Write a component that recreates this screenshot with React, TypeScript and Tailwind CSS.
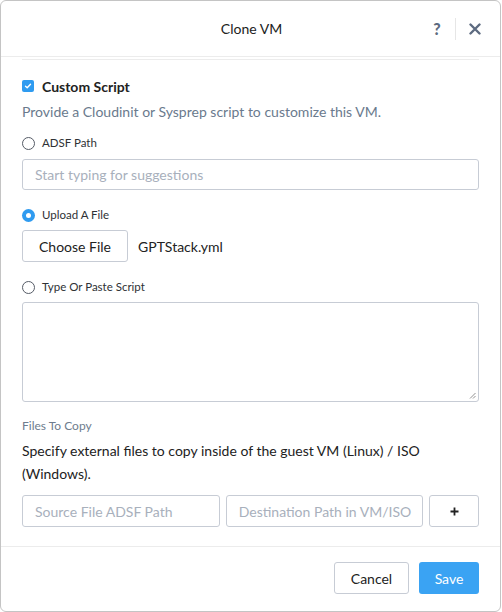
import React from 'react';

const Radio = ({ checked }: { checked?: boolean }) =>
  checked ? (
    <span className="w-[13px] h-[13px] rounded-full bg-[#2f9bf0] flex items-center justify-center shrink-0">
      <span className="w-[5px] h-[5px] rounded-full bg-white" />
    </span>
  ) : (
    <span className="w-[13px] h-[13px] rounded-full border border-[#555b66] shrink-0" />
  );

const RadioRow = ({ label, checked }: { label: string; checked?: boolean }) => (
  <div className="flex items-center h-[16px] gap-[7px]">
    <Radio checked={checked} />
    <span className="text-[11.5px] text-[#2e3135]">{label}</span>
  </div>
);

export default function App() {
  return (
    <div className="w-[502px] h-[612px] bg-white">
      <div
        className="w-[501px] h-[612px] flex flex-col border border-[#c4c4c4] rounded-[6px] bg-white overflow-hidden"
        style={{ fontFamily: 'Lato, "Open Sans", sans-serif' }}
      >
        {/* header */}
        <div className="h-[56px] shrink-0 flex items-center border-b border-[#ececec] relative">
          <div className="flex-1 text-center text-[14px] text-[#222] pl-[2px]">Clone VM</div>
          <div className="absolute right-0 top-0 h-[56px] flex items-center">
            <span className="text-[16px] font-black text-[#5d6b80] w-[18px] text-center">?</span>
            <span className="w-px h-[22px] bg-[#e6e6e6] ml-[9px] mr-[13px]" />
            <svg width="12" height="12" viewBox="0 0 12 12" className="mr-[19px]">
              <path d="M1.5 1.5 L10.5 10.5 M10.5 1.5 L1.5 10.5" stroke="#5d6b80" strokeWidth="2.4" strokeLinecap="round" />
            </svg>
          </div>
        </div>

        {/* body */}
        <div className="flex-1 px-[21px]">
          <div className="h-[3px] border-b border-[#ececec]" />

          <div className="mt-[18px] flex items-center h-[16px] gap-[8px]">
            <span className="w-[12px] h-[12px] rounded-[2px] bg-[#2f9bf0] flex items-center justify-center">
              <svg width="8" height="8" viewBox="0 0 8 8">
                <path d="M1.5 4.2 L3.2 5.8 L6.5 2.2" stroke="white" strokeWidth="1.4" fill="none" strokeLinecap="round" strokeLinejoin="round" />
              </svg>
            </span>
            <span className="text-[14px] font-bold text-[#222]">Custom Script</span>
          </div>

          <p className="mt-[9px] h-[18px] leading-[18px] text-[14px] text-[#6a7a8d]">
            Provide a Cloudinit or Sysprep script to customize this VM.
          </p>

          <div className="mt-[14px]">
            <RadioRow label="ADSF Path" />
          </div>
          <div className="mt-[8px] h-[31px] border border-[#c7ccd5] rounded-[3px] flex items-center px-[12px] text-[14px] text-[#a8b0bc]">
            Start typing for suggestions
          </div>

          <div className="mt-[17px]">
            <RadioRow label="Upload A File" checked />
          </div>
          <div className="mt-[7px] flex items-center gap-[10px]">
            <button className="h-[32px] w-[106px] border border-[#c7ccd5] rounded-[3px] text-[14px] text-[#222] bg-white">
              Choose File
            </button>
            <span className="text-[14px] text-[#222]">GPTStack.yml</span>
          </div>

          <div className="mt-[17px]">
            <RadioRow label="Type Or Paste Script" />
          </div>
          <div className="mt-[7px] h-[100px] border border-[#c7ccd5] rounded-[3px] relative">
            <svg width="7" height="7" viewBox="0 0 7 7" className="absolute right-[2px] bottom-[2px]">
              <path d="M1 6.5 L6.5 1 M4 6.5 L6.5 4" stroke="#777" strokeWidth="0.8" />
            </svg>
          </div>

          <div className="mt-[16px] h-[16px] leading-[16px] text-[12px] text-[#6e7c8e]">Files To Copy</div>
          <p className="mt-[5px] text-[14px] leading-[23px] text-[#222]">
            Specify external files to copy inside of the guest VM (Linux) / ISO (Windows).
          </p>

          <div className="mt-[10px] flex gap-[6px]">
            <div className="w-[199px] h-[32px] border border-[#c7ccd5] rounded-[3px] flex items-center px-[12px] text-[14px] text-[#a8b0bc] whitespace-nowrap overflow-hidden">
              Source File ADSF Path
            </div>
            <div className="w-[199px] h-[32px] border border-[#c7ccd5] rounded-[3px] flex items-center px-[12px] text-[14px] text-[#a8b0bc] whitespace-nowrap overflow-hidden">
              Destination Path in VM/ISO
            </div>
            <div className="w-[50px] h-[32px] border border-[#c7ccd5] rounded-[3px] flex items-center justify-center">
              <svg width="9" height="9" viewBox="0 0 9 9">
                <path d="M4.5 0.5 V8.5 M0.5 4.5 H8.5" stroke="#222" strokeWidth="1.8" />
              </svg>
            </div>
          </div>
        </div>

        {/* footer */}
        <div className="h-[65px] shrink-0 border-t border-[#ececec] flex items-start justify-end gap-[10px] pt-[15px] pr-[21px]">
          <button className="h-[32px] w-[75px] border border-[#c7ccd5] rounded-[3px] text-[14px] text-[#222] bg-white">
            Cancel
          </button>
          <button className="h-[32px] w-[60px] rounded-[3px] text-[14px] text-white bg-[#3aa3f3]">
            Save
          </button>
        </div>
      </div>
    </div>
  );
}
